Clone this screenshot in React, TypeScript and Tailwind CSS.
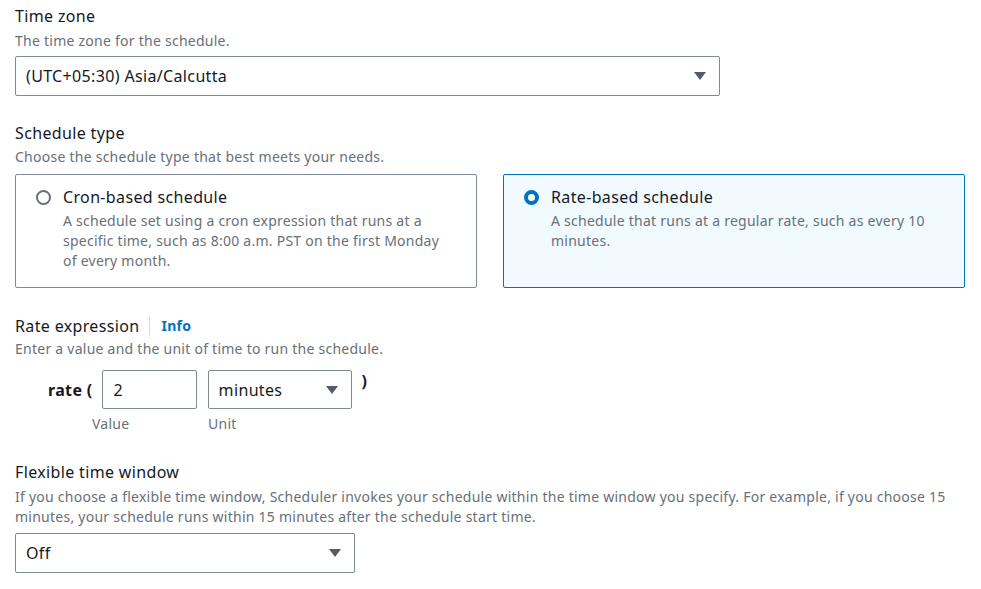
import React from "react";

function Caret() {
  return (
    <svg width="14" height="10" viewBox="0 0 14 10" className="shrink-0">
      <path d="M1 1h12L7 9z" fill="#545b64" />
    </svg>
  );
}

function Select({ value, className }: { value: string; className: string }) {
  return (
    <div
      className={
        "flex items-center justify-between rounded-[2px] border border-[#7f8a93] bg-white pl-[10px] pr-[12px] text-[16px] tracking-[0.35px] text-[#16191f] " +
        className
      }
    >
      <span>{value}</span>
      <Caret />
    </div>
  );
}

function Radio({ checked }: { checked?: boolean }) {
  return checked ? (
    <span className="mt-[4px] h-[15px] w-[15px] shrink-0 rounded-full border-[4px] border-[#0073bb] bg-white" />
  ) : (
    <span className="mt-[4px] h-[15px] w-[15px] shrink-0 rounded-full border-[2px] border-[#687078] bg-white" />
  );
}

function ScheduleCard({
  title,
  text,
  checked,
}: {
  title: string;
  text: string;
  checked?: boolean;
}) {
  return (
    <div
      className={
        "flex gap-[12px] rounded-[2px] border pb-[16px] pl-[20px] pr-[20px] pt-[11px] " +
        (checked ? "border-[#0073bb] bg-[#f1faff]" : "border-[#7f8a93] bg-white")
      }
    >
      <Radio checked={checked} />
      <div>
        <div className="text-[16px] leading-[22px] tracking-[0.35px] text-[#16191f]">{title}</div>
        <div className="mt-[3px] text-[14px] leading-[20px] tracking-[0.25px] text-[#687078]">{text}</div>
      </div>
    </div>
  );
}

export default function App() {
  return (
    <div className="h-[589px] w-[981px] bg-white pl-[15px] pr-[16px] pt-[5px] font-['Noto_Sans','Open_Sans',sans-serif]">
      <div className="text-[16px] leading-[22px] tracking-[0.35px] text-[#16191f]">Time zone</div>
      <div className="mt-[4px] text-[14px] leading-[20px] tracking-[0.25px] text-[#687078]">
        The time zone for the schedule.
      </div>
      <Select value="(UTC+05:30) Asia/Calcutta" className="mt-[5px] h-[40px] w-[705px]" />

      <div className="mt-[26px] text-[16px] leading-[22px] tracking-[0.35px] text-[#16191f]">Schedule type</div>
      <div className="mt-[3px] text-[14px] leading-[20px] tracking-[0.25px] text-[#687078]">
        Choose the schedule type that best meets your needs.
      </div>
      <div className="mt-[7px] grid grid-cols-2 gap-[26px]">
        <ScheduleCard
          title="Cron-based schedule"
          text="A schedule set using a cron expression that runs at a specific time, such as 8:00 a.m. PST on the first Monday of every month."
        />
        <ScheduleCard
          checked
          title="Rate-based schedule"
          text="A schedule that runs at a regular rate, such as every 10 minutes."
        />
      </div>

      <div className="mt-[27px] flex items-center text-[#16191f]">
        <span className="text-[16px] leading-[22px] tracking-[0.35px]">Rate expression</span>
        <span className="ml-[10px] h-[18px] w-px bg-[#d5dbdb]" />
        <span className="ml-[11px] text-[14px] font-bold leading-[22px] tracking-[0.25px] text-[#0073bb]">Info</span>
      </div>
      <div className="mt-[2px] text-[14px] leading-[20px] tracking-[0.25px] text-[#687078]">
        Enter a value and the unit of time to run the schedule.
      </div>

      <div className="mt-[11px] flex items-center pl-[33px] text-[#16191f]">
        <span className="text-[16px] font-bold tracking-[0.35px]">rate (</span>
        <div className="ml-[9px] flex h-[39px] w-[95px] items-center rounded-[2px] border border-[#7f8a93] pl-[11px] text-[16px]">
          2
        </div>
        <Select value="minutes" className="ml-[11px] h-[39px] w-[144px]" />
        <span className="ml-[10px] self-start text-[16px] font-bold leading-[22px]">)</span>
      </div>
      <div className="mt-[5px] flex pl-[77px] text-[14px] leading-[20px] tracking-[0.25px] text-[#687078]">
        <span className="w-[116px]">Value</span>
        <span>Unit</span>
      </div>

      <div className="mt-[27px] text-[16px] leading-[22px] tracking-[0.35px] text-[#16191f]">Flexible time window</div>
      <div className="mt-[4px] text-[14px] leading-[20px] tracking-[0.25px] text-[#687078]">
        If you choose a flexible time window, Scheduler invokes your schedule within the time window you
        specify. For example, if you choose 15 minutes, your schedule runs within 15 minutes after the
        schedule start time.
      </div>
      <Select value="Off" className="mt-[6px] h-[40px] w-[340px]" />
    </div>
  );
}
